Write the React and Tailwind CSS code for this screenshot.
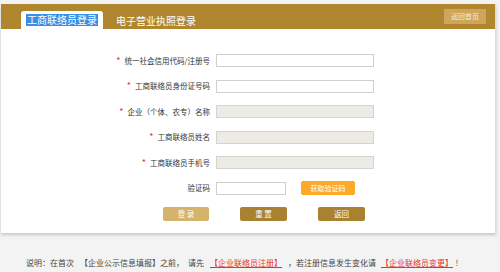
const fields = [
  { label: "统一社会信用代码/注册号", required: true, disabled: false },
  { label: "工商联络员身份证号码", required: true, disabled: false },
  { label: "企业（个体、农专）名称", required: true, disabled: true },
  { label: "工商联络员姓名", required: true, disabled: true },
  { label: "工商联络员手机号", required: true, disabled: true },
];

const font = { fontFamily: '"Noto Sans CJK SC", "Noto Sans", sans-serif' };

export default function App() {
  return (
    <div className="w-[500px] h-[272px] bg-[#f3f3f3] pt-[4px] overflow-hidden" style={font}>
      <div className="ml-[1px] w-[495px] bg-white shadow-[0_2px_3px_rgba(0,0,0,0.18)] border-r border-[#dcdcdc]">
        <div className="h-[25px] bg-[#b0872f] flex items-end pl-[20px]">
          <div className="w-[82px] h-[18px] bg-white rounded-t-[3px] flex items-center justify-center">
            <span className="bg-[#3a8ee6] text-white text-[10px] leading-[12px] px-[1px]">工商联络员登录</span>
          </div>
          <div className="h-[18px] ml-[13px] flex items-center text-white text-[10px]">电子营业执照登录</div>
          <div className="ml-auto mr-[9px] self-start mt-[5px] w-[42px] h-[15px] bg-[#cfa55b] flex items-center justify-center text-[#f6ead2] text-[7px]">
            返回首页
          </div>
        </div>

        <div className="h-[204px] pt-[25px]">
          <div className="flex flex-col gap-[12.5px]">
            {fields.map((f) => (
              <div key={f.label} className="flex items-center h-[13px]">
                <div className="w-[209px] text-right text-[7.5px] text-[#333] whitespace-nowrap">
                  {f.required && <span className="text-[#d9342b] text-[9px] mr-[4px]">*</span>}
                  {f.label}
                </div>
                <div
                  className={`ml-[6px] w-[158px] h-[13px] border ${
                    f.disabled ? "bg-[#edebe5] border-[#d6d4cf]" : "bg-white border-[#cfcfcf]"
                  }`}
                />
              </div>
            ))}
            <div className="flex items-center h-[13px]">
              <div className="w-[209px] text-right text-[7.5px] text-[#333]">验证码</div>
              <div className="ml-[6px] w-[70px] h-[13px] border border-[#cfcfcf] bg-white" />
              <div className="ml-[15px] w-[54px] h-[14px] rounded-[2px] bg-[#fba926] flex items-center justify-center text-white text-[7px]">
                获取验证码
              </div>
            </div>
            <div className="flex items-center pl-[162px] gap-[31px]">
              <div className="w-[46px] h-[14px] rounded-[2px] bg-[#d5b36b] flex items-center justify-center text-white text-[7.5px]">登 录</div>
              <div className="w-[47px] h-[14px] rounded-[2px] bg-[#a98231] flex items-center justify-center text-white text-[7.5px]">重 置</div>
              <div className="w-[47px] h-[14px] rounded-[2px] bg-[#a98231] flex items-center justify-center text-white text-[7.5px]">返回</div>
            </div>
          </div>
        </div>
      </div>

      <div className="mt-[24px] pl-[26px] flex items-center text-[8px] leading-[12px] text-[#444] whitespace-nowrap">
        <span>说明：</span>
        <span>在首次</span>
        <span className="ml-[6px]">【企业公示信息填报】</span>
        <span>之前，</span>
        <span className="ml-[4px]">请先</span>
        <span className="ml-[6px] text-[#e5332a] underline">【企业联络员注册】</span>
        <span className="ml-[6px]">，若注册信息发生变化请</span>
        <span className="ml-[5px] text-[#e5332a] underline">【企业联络员变更】</span>
        <span className="ml-[2px] text-[#e5332a]">！</span>
      </div>
    </div>
  );
}
